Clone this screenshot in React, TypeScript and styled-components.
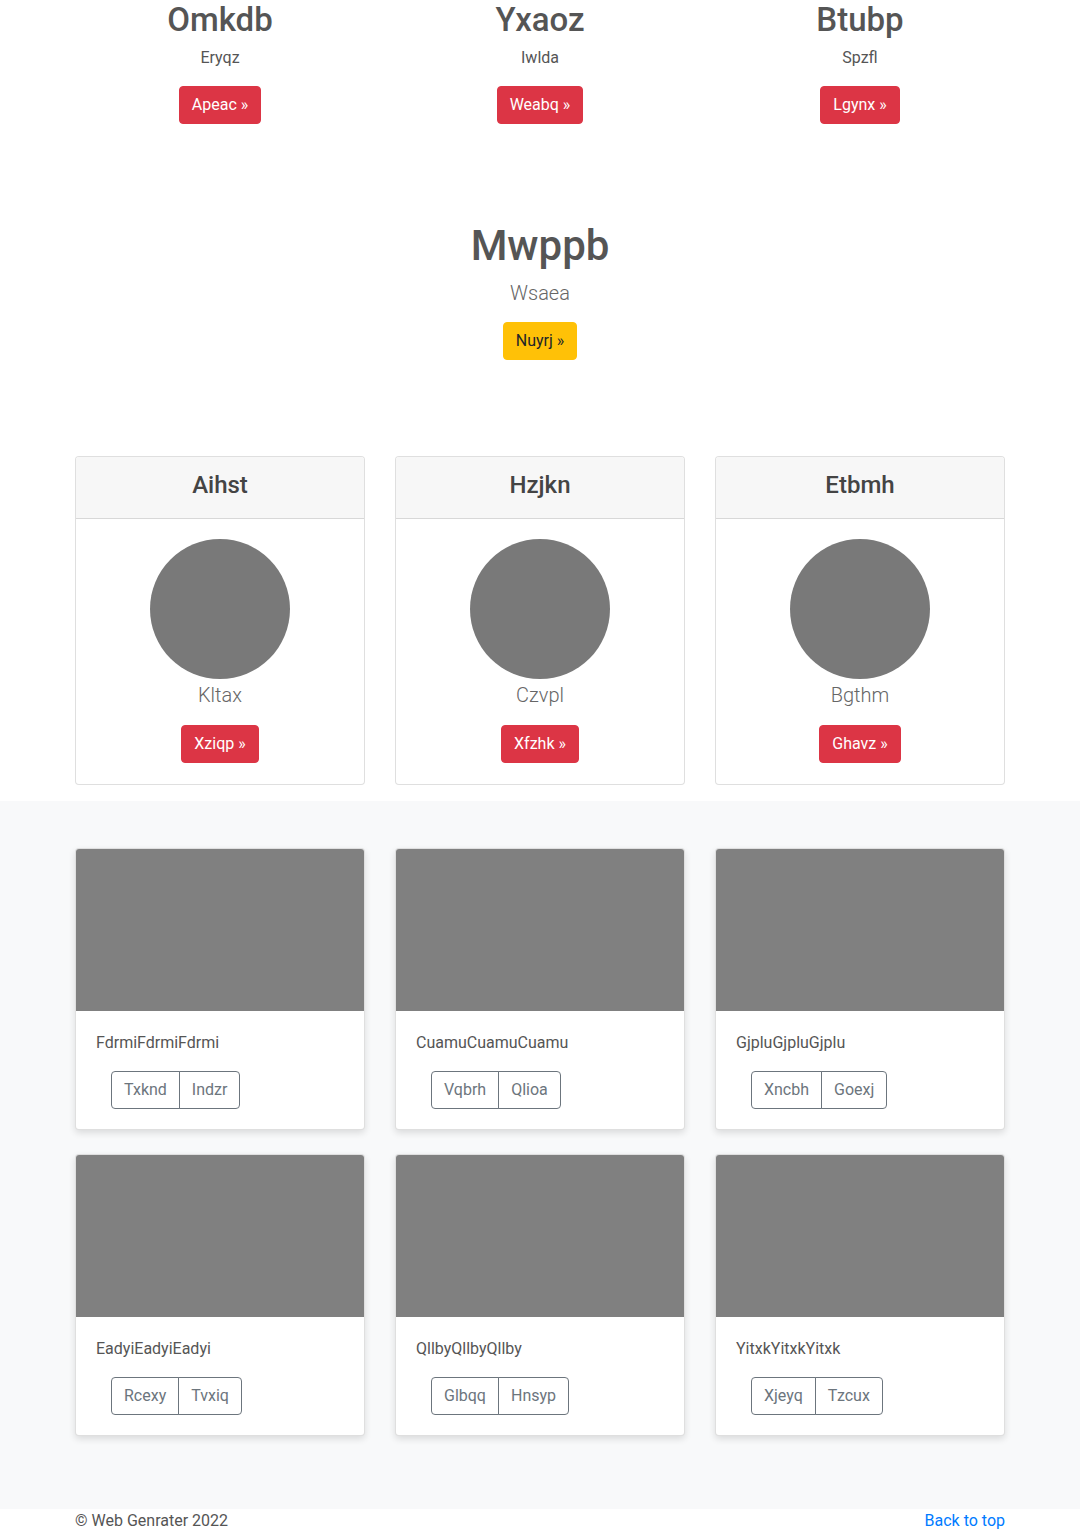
import React from "react";
import styled, { createGlobalStyle } from "styled-components";

const GlobalStyle = createGlobalStyle`
  *, *::before, *::after { box-sizing: border-box; }
  html, body { margin: 0; padding: 0; background: #fff; }
  body {
    font-family: Roboto, "Liberation Sans", Arial, sans-serif;
    font-size: 16px;
    line-height: 1.5;
    color: #555;
  }
`;

const Container = styled.div`
  width: 960px;
  margin: 0 auto;
  padding: 0 15px;
`;

const Grid3 = styled.div<{ $gap?: number }>`
  display: grid;
  grid-template-columns: repeat(3, 1fr);
  column-gap: 30px;
  row-gap: ${(p) => p.$gap ?? 0}px;
`;

const Marketing = styled.div`
  text-align: center;
`;

const MarketingTitle = styled.h2`
  margin: 0 0 6px;
  font-size: 33px;
  font-weight: 500;
  line-height: 40px;
  color: #555;
`;

const Text = styled.p`
  margin: 0 0 16px;
`;

const Btn = styled.a<{ $variant?: "danger" | "warning" }>`
  display: inline-block;
  padding: 6px 12px;
  font-size: 16px;
  line-height: 24px;
  border-radius: 4px;
  border: 1px solid ${(p) => (p.$variant === "warning" ? "#ffc107" : "#dc3545")};
  background: ${(p) => (p.$variant === "warning" ? "#ffc107" : "#dc3545")};
  color: ${(p) => (p.$variant === "warning" ? "#212529" : "#fff")};
  text-decoration: none;
  cursor: pointer;
`;

const Hero = styled.section`
  margin-top: 98px;
  text-align: center;
`;

const HeroTitle = styled.h1`
  margin: 0 0 8px;
  font-size: 42px;
  font-weight: 500;
  line-height: 48px;
  color: #555;
`;

const Lead = styled.p`
  margin: 0 0 14px;
  font-size: 20px;
  font-weight: 300;
  line-height: 30px;
  color: #666;
`;

const PricingRow = styled(Grid3)`
  margin-top: 96px;
`;

const Card = styled.div`
  background: #fff;
  border: 1px solid rgba(0, 0, 0, 0.125);
  border-radius: 4px;
  overflow: hidden;
`;

const CardHeader = styled.div`
  background: #f7f7f7;
  border-bottom: 1px solid rgba(0, 0, 0, 0.125);
  padding: 13px 20px 18px;
  text-align: center;
`;

const CardTitle = styled.h4`
  margin: 0;
  font-size: 24px;
  font-weight: 500;
  line-height: 30px;
  color: #444;
`;

const PricingBody = styled.div`
  padding: 20px 20px 21px;
  text-align: center;
`;

const Avatar = styled.div`
  width: 140px;
  height: 140px;
  border-radius: 50%;
  background: #797979;
  margin: 0 auto 1px;
`;

const Name = styled.p`
  margin: 0 0 15px;
  font-size: 20px;
  font-weight: 300;
  line-height: 30px;
  color: #666;
`;

const Album = styled.section`
  margin-top: 16px;
  background: #f8f9fa;
  padding: 47px 0 49px;
`;

const AlbumCard = styled(Card)`
  margin-bottom: 24px;
  box-shadow: 0 3px 7px rgba(0, 0, 0, 0.12);
`;

const Thumb = styled.div`
  width: 100%;
  aspect-ratio: 16 / 9;
  background: #808080;
`;

const AlbumBody = styled.div`
  padding: 20px;
`;

const AlbumText = styled.p`
  margin: 0 0 16px;
`;

const BtnGroup = styled.div`
  display: inline-flex;
  margin-left: 15px;
`;

const OutlineBtn = styled.button`
  font-family: inherit;
  font-size: 16px;
  line-height: 24px;
  padding: 6px 12px;
  background: transparent;
  color: #6c757d;
  border: 1px solid #6c757d;
  cursor: pointer;
  &:first-child {
    border-radius: 4px 0 0 4px;
  }
  &:last-child {
    border-radius: 0 4px 4px 0;
    margin-left: -1px;
  }
`;

const Footer = styled.footer`
  display: flex;
  justify-content: space-between;
  line-height: 24px;
`;

const FooterText = styled.p`
  margin: 0;
`;

const TopLink = styled.a`
  color: #007bff;
  text-decoration: none;
`;

const marketing = [
  { t: "Omkdb", s: "Eryqz", b: "Apeac" },
  { t: "Yxaoz", s: "Iwlda", b: "Weabq" },
  { t: "Btubp", s: "Spzfl", b: "Lgynx" },
];

const pricing = [
  { t: "Aihst", n: "Kltax", b: "Xziqp" },
  { t: "Hzjkn", n: "Czvpl", b: "Xfzhk" },
  { t: "Etbmh", n: "Bgthm", b: "Ghavz" },
];

const album = [
  { t: "FdrmiFdrmiFdrmi", a: "Txknd", b: "Indzr" },
  { t: "CuamuCuamuCuamu", a: "Vqbrh", b: "Qlioa" },
  { t: "GjpluGjpluGjplu", a: "Xncbh", b: "Goexj" },
  { t: "EadyiEadyiEadyi", a: "Rcexy", b: "Tvxiq" },
  { t: "QllbyQllbyQllby", a: "Glbqq", b: "Hnsyp" },
  { t: "YitxkYitxkYitxk", a: "Xjeyq", b: "Tzcux" },
];

export default function App() {
  return (
    <>
      <GlobalStyle />
      <Container>
        <Grid3>
          {marketing.map((m) => (
            <Marketing key={m.t}>
              <MarketingTitle>{m.t}</MarketingTitle>
              <Text>{m.s}</Text>
              <Btn $variant="danger">{m.b} »</Btn>
            </Marketing>
          ))}
        </Grid3>
        <Hero>
          <HeroTitle>Mwppb</HeroTitle>
          <Lead>Wsaea</Lead>
          <Btn $variant="warning">Nuyrj »</Btn>
        </Hero>
        <PricingRow>
          {pricing.map((p) => (
            <Card key={p.t}>
              <CardHeader>
                <CardTitle>{p.t}</CardTitle>
              </CardHeader>
              <PricingBody>
                <Avatar />
                <Name>{p.n}</Name>
                <Btn $variant="danger">{p.b} »</Btn>
              </PricingBody>
            </Card>
          ))}
        </PricingRow>
      </Container>
      <Album>
        <Container>
          <Grid3>
            {album.map((a) => (
              <AlbumCard key={a.t}>
                <Thumb />
                <AlbumBody>
                  <AlbumText>{a.t}</AlbumText>
                  <BtnGroup>
                    <OutlineBtn>{a.a}</OutlineBtn>
                    <OutlineBtn>{a.b}</OutlineBtn>
                  </BtnGroup>
                </AlbumBody>
              </AlbumCard>
            ))}
          </Grid3>
        </Container>
      </Album>
      <Container>
        <Footer>
          <FooterText>© Web Genrater 2022</FooterText>
          <TopLink href="#">Back to top</TopLink>
        </Footer>
      </Container>
    </>
  );
}
